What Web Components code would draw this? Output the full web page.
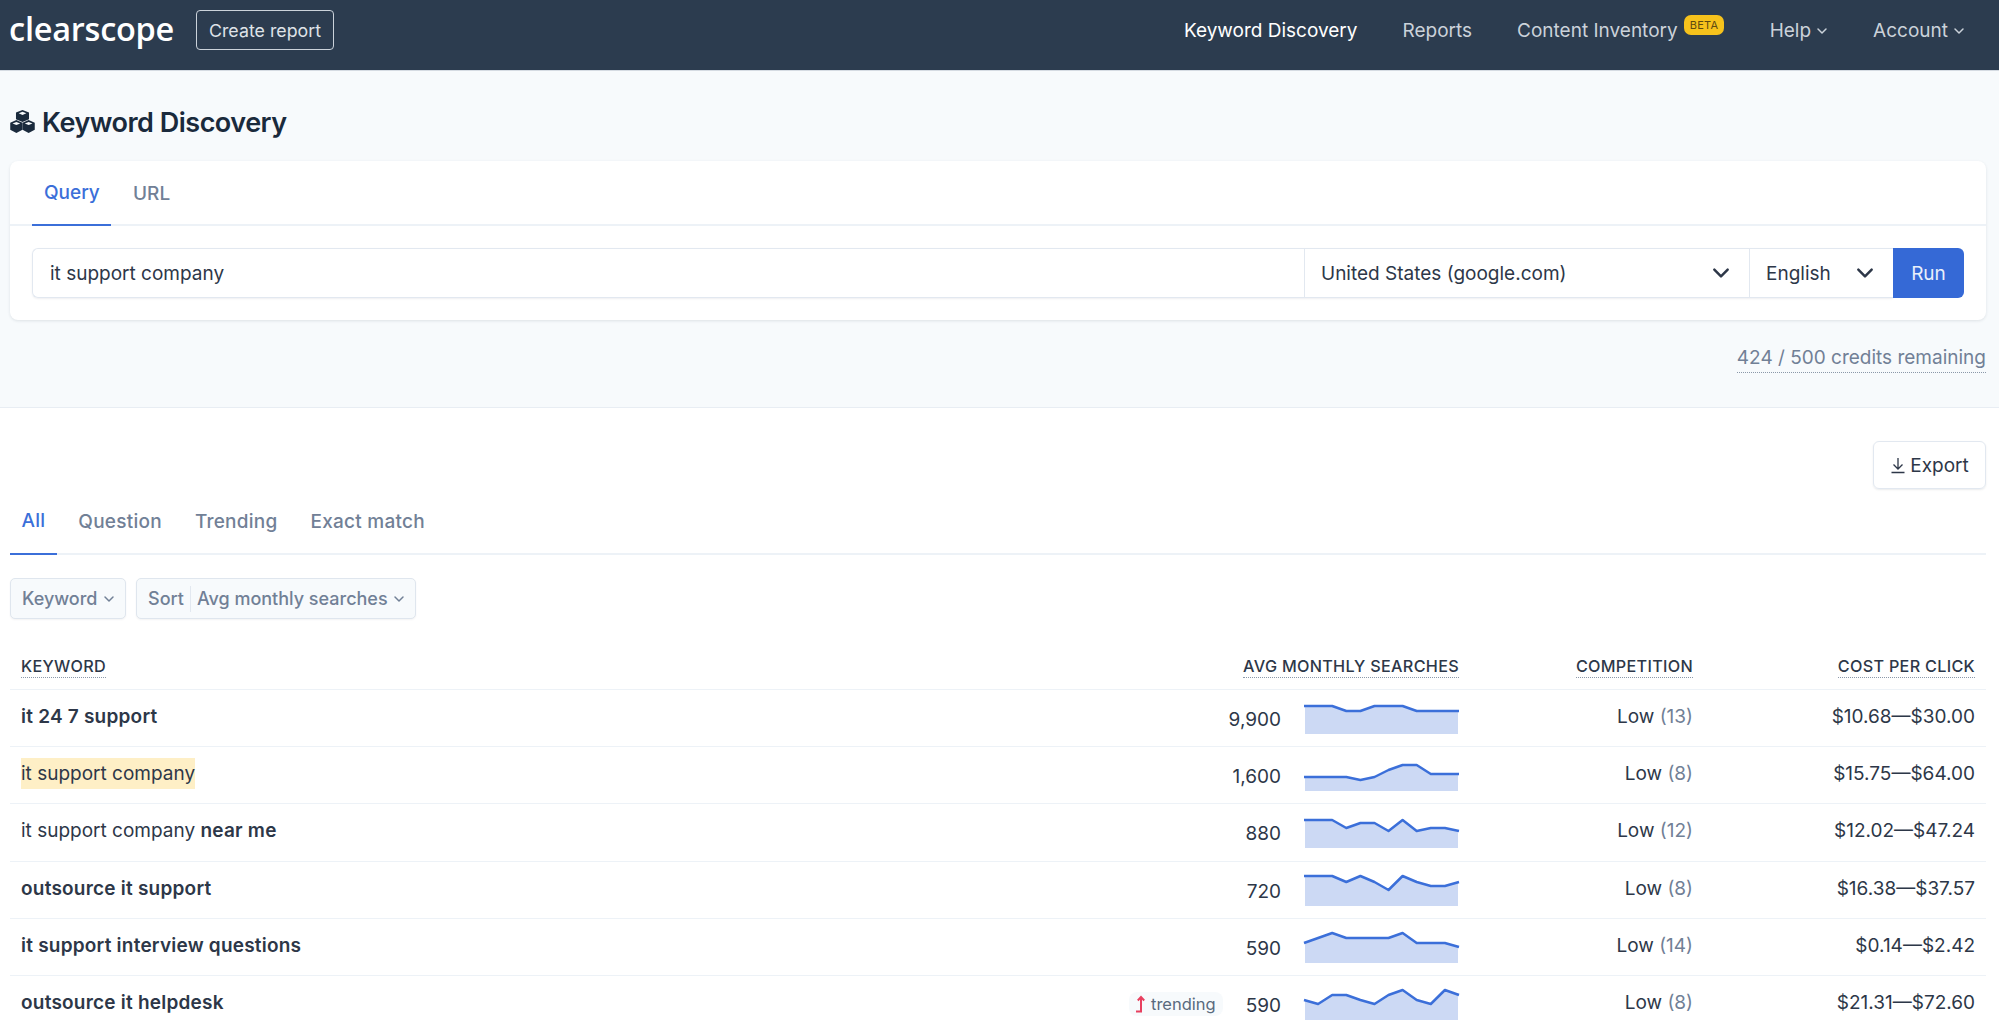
<!DOCTYPE html>
<html>
<head>
<meta charset="utf-8">
<title>Keyword Discovery</title>
<style>
  html, body { margin: 0; padding: 0; height: 100%; overflow: hidden; background: #fff; }
  body { font-family: Inter, "Liberation Sans", sans-serif; color: #2d3748; }
</style>
</head>
<body>

<kd-navbar>
  <nav-link active>Keyword Discovery</nav-link>
  <nav-link>Reports</nav-link>
  <nav-link badge="BETA">Content Inventory</nav-link>
  <nav-link caret>Help</nav-link>
  <nav-link caret>Account</nav-link>
</kd-navbar>

<kd-search-panel></kd-search-panel>

<kd-results>
  <kd-row volume="9,900" low="13" cpc="$10.68—$30.00" points="2,2,2,7,7,2,2,2,7,7,7,7"><b>it 24 7 support</b></kd-row>
  <kd-row volume="1,600" low="8" cpc="$15.75—$64.00" points="16,16,16,16,19,16,9,4,4,13,13,13"><mark style="background:#feefc6;color:inherit;padding:4px 0">it support company</mark></kd-row>
  <kd-row volume="880" low="12" cpc="$12.02—$47.24" points="2,2,2,10,5,5,13,2,13,10,10,13">it support company <b>near me</b></kd-row>
  <kd-row volume="720" low="8" cpc="$16.38—$37.57" points="0,0,0,6,0,6,14,0,6,10,10,6"><b>outsource it support</b></kd-row>
  <kd-row volume="590" low="14" cpc="$0.14—$2.42" points="10,5,0,5,5,5,5,0,10,10,10,14"><b>it support interview questions</b></kd-row>
  <kd-row volume="590" low="8" cpc="$21.31—$72.60" points="10,14,5,5,10,14,5,0,10,14,0,5" trending><b>outsource it helpdesk</b></kd-row>
</kd-results>

<script>
const CHEVRON = '<svg viewBox="0 0 12 12" fill="none" stroke="currentColor" stroke-width="1.5" stroke-linecap="round" stroke-linejoin="round"><path d="M2 4l4 4 4-4"/></svg>';

class NavLink extends HTMLElement {
  constructor() {
    super();
    const badge = this.getAttribute('badge');
    const caret = this.hasAttribute('caret') ? '<span class="caret">' + CHEVRON + '</span>' : '';
    this.attachShadow({mode: 'open'}).innerHTML = `
      <style>
        :host { display: flex; align-items: center; position: relative; color: #cbd2da; font-size: 19px; white-space: nowrap; }
        :host([active]) { color: #fff; }
        :host([badge]) { margin-right: 47px; }
        .caret { width: 12px; height: 12px; margin-left: 5px; display: block; }
        .caret svg { display: block; }
        .badge { position: absolute; left: calc(100% + 6px); top: -4px; background: #f6c21c; color: #5d4a12; font-size: 11px; line-height: 20px; height: 20px; padding: 0 6px; border-radius: 7px; letter-spacing: 0.3px; }
      </style>
      <slot></slot>${caret}${badge ? '<span class="badge">' + badge + '</span>' : ''}`;
  }
}
customElements.define('nav-link', NavLink);

class KdNavbar extends HTMLElement {
  constructor() {
    super();
    this.attachShadow({mode: 'open'}).innerHTML = `
      <style>
        :host { display: flex; align-items: center; height: 70px; box-sizing: content-box; background: #2c3c4f; border-bottom: 1px solid #d5dbe2; padding: 0 34px 0 9px; }
        .wrap { display: flex; align-items: center; flex: 1; height: 60px; margin-bottom: 10px; }
        .logo { font-family: "Open Sans", sans-serif; font-weight: 600; font-size: 32.500px; color: #fff; letter-spacing: -0.25px; line-height: 1; width: 167px; margin-top: -2px; white-space: nowrap; }
        .create { margin-left: 20px; width: 138px; height: 40px; box-sizing: border-box; border: 1px solid #cbd2da; border-radius: 4px; color: #dfe3e8; font-size: 17.800px; display: flex; align-items: center; justify-content: center; }
        .links { margin-left: auto; display: flex; gap: 45px; margin-top: 1px; }
      </style>
      <div class="wrap">
        <span class="logo">clearscope</span>
        <span class="create">Create report</span>
        <div class="links"><slot></slot></div>
      </div>`;
  }
}
customElements.define('kd-navbar', KdNavbar);

class KdSelect extends HTMLElement {
  constructor() {
    super();
    this.attachShadow({mode: 'open'}).innerHTML = `
      <style>
        :host { display: flex; align-items: center; justify-content: space-between; box-sizing: border-box; padding: 0 18px 0 16px; border-left: 1px solid #e2e8f0; height: 100%; font-size: 19px; color: #2d3748; }
        .c { width: 20px; height: 20px; color: #2d3748; }
        svg { display: block; }
      </style>
      <slot></slot><span class="c">${CHEVRON}</span>`;
  }
}
customElements.define('kd-select', KdSelect);

class KdSearchPanel extends HTMLElement {
  constructor() {
    super();
    this.attachShadow({mode: 'open'}).innerHTML = `
      <style>
        :host { display: block; height: 336px; background: #f7fafc; border-bottom: 1px solid #e8edf3; padding: 0 13px 0 10px; box-sizing: content-box; }
        h1 { margin: 0; height: 90px; display: flex; align-items: center; gap: 7px; padding-top: 12px; box-sizing: border-box; font-size: 27px; font-weight: 600; color: #1a2a3c; letter-spacing: -0.5px; }
        h1 svg { width: 25px; height: 23px; flex: none; margin-top: -1px; }
        .card { background: #fff; border-radius: 8px; box-shadow: 0 1px 3px rgba(45,55,72,.12); height: 159px; }
        .tabs { display: flex; height: 65px; padding-left: 22px; border-bottom: 2px solid #edf2f7; box-sizing: border-box; font-size: 19px; font-weight: 500; color: #718096; }
        .tab { display: flex; align-items: center; padding: 0 12px; height: 65px; box-sizing: border-box; padding-bottom: 1px; }
        .tab.on { color: #3b6fd9; border-bottom: 2px solid #3b6fd9; width: 79px; }
        .tab + .tab { margin-left: 10px; }
        .form { display: flex; margin: 22px 22px 0; height: 50px; }
        .field { display: flex; flex: 1; height: 50px; box-sizing: border-box; border: 1px solid #e2e8f0; border-right: 0; border-radius: 6px 0 0 6px; box-shadow: 0 1px 2px rgba(45,55,72,.08); font-size: 19px; }
        .q { flex: 1; display: flex; align-items: center; padding-left: 17px; }
        kd-select.country { width: 445px; }
        kd-select.lang { width: 144px; }
        .run { width: 71px; background: #3569d6; color: #e9effb; font-size: 19px; border-radius: 0 6px 6px 0; display: flex; align-items: center; justify-content: center; }
        .credits { display: flex; justify-content: flex-end; margin-top: 26px; font-size: 19px; color: #718096; }
        .credits span { border-bottom: 1px dotted #8b98a9; padding-bottom: 2px; line-height: 24px; }
      </style>
      <h1>
        <svg viewBox="0 0 26 24"><g fill="#1a2a3c">
          <path d="M13 0l6.800 2.700v7L13 12.400 6.200 9.700v-7z"/>
          <path d="M6.600 10.500L13 13.200v7.400L6.600 24 .2 20.600v-7.400z"/>
          <path d="M19.400 10.500l6.400 2.700v7.400L19.400 24 13 20.600v-7.400z"/>
        </g><g fill="#f7fafc">
          <path d="M13 1.900l4 1.600-4 1.600-4-1.600z"/>
          <path d="M6.600 12.400l4 1.600-4 1.600-4-1.600z"/>
          <path d="M19.400 12.400l4 1.600-4 1.600-4-1.600z"/>
        </g></svg>
        Keyword Discovery
      </h1>
      <div class="card">
        <div class="tabs"><span class="tab on">Query</span><span class="tab">URL</span></div>
        <div class="form">
          <div class="field">
            <div class="q">it support company</div>
            <kd-select class="country">United States (google.com)</kd-select>
            <kd-select class="lang">English</kd-select>
          </div>
          <div class="run">Run</div>
        </div>
      </div>
      <div class="credits"><span>424 / 500 credits remaining</span></div>`;
  }
}
customElements.define('kd-search-panel', KdSearchPanel);

class KdSpark extends HTMLElement {
  constructor() {
    super();
    const vals = this.getAttribute('points').split(',').map(Number);
    const step = 155 / (vals.length - 1);
    const line = vals.map((v, i) => (i * step).toFixed(1) + ',' + (v + 1)).join(' ');
    this.attachShadow({mode: 'open'}).innerHTML = `
      <style>
        :host { display: block; width: 155px; height: 31px; flex: none; }
        svg { display: block; overflow: visible; }
      </style>
      <svg width="155" height="31" viewBox="0 0 155 31">
        <polygon points="1,31 1,${vals[0] + 1} ${line} 154,${vals[vals.length - 1] + 1} 154,31" fill="#ccd9f4"/>
        <polyline points="${line}" fill="none" stroke="#3b6fd9" stroke-width="2.500" stroke-linejoin="round"/>
      </svg>`;
  }
}
customElements.define('kd-spark', KdSpark);

class KdRow extends HTMLElement {
  constructor() {
    super();
    const a = n => this.getAttribute(n);
    const trend = this.hasAttribute('trending') ? `<span class="trend">
      <svg width="10" height="18" viewBox="0 0 10 18" fill="none" stroke="#e8405f" stroke-width="2"><path d="M0 16.500h5V2"/><path d="M1.800 5.500L5 2l3.200 3.500"/></svg>trending</span>` : '';
    this.attachShadow({mode: 'open'}).innerHTML = `
      <style>
        :host { display: grid; grid-template-columns: 1fr 234px 282px; align-items: center; height: 57.200px; box-sizing: border-box; border-bottom: 1px solid #edf2f7; padding: 0 11px; font-size: 19px; color: #2d3748; }
        .kw { display: flex; align-items: center; min-width: 0; }
        .name { flex: 1; white-space: pre-wrap; padding-bottom: 3px; }
        ::slotted(b) { font-weight: 600; letter-spacing: 0.22px; }
        .trend { display: flex; align-items: center; gap: 5px; height: 24px; padding: 0 7px; margin-right: 23px; background: #f7fafc; border-radius: 8px; font-size: 16.500px; color: #5a6a7e; }
        .num { text-align: right; margin-right: 23px; padding-top: 3px; }
        kd-spark { margin-top: 1px; }
        .comp, .cpc { text-align: right; padding-bottom: 3px; }
        .comp i { font-style: normal; color: #718096; }
      </style>
      <div class="kw"><span class="name"><slot></slot></span>${trend}<span class="num">${a('volume')}</span><kd-spark points="${a('points')}"></kd-spark></div>
      <div class="comp">Low <i>(${a('low')})</i></div>
      <div class="cpc">${a('cpc')}</div>`;
  }
}
customElements.define('kd-row', KdRow);

class KdResults extends HTMLElement {
  constructor() {
    super();
    this.attachShadow({mode: 'open'}).innerHTML = `
      <style>
        :host { display: block; padding: 0 13px 0 10px; }
        .top { display: flex; justify-content: flex-end; padding-top: 33px; }
        .export { display: flex; align-items: center; justify-content: center; gap: 4px; width: 113px; height: 48px; box-sizing: border-box; border: 1px solid #e2e8f0; border-radius: 6px; box-shadow: 0 1px 2px rgba(45,55,72,.1); font-size: 19px; color: #2d3748; }
        .tabs { display: flex; height: 66px; border-bottom: 2px solid #edf2f7; box-sizing: border-box; font-size: 19px; font-weight: 500; color: #718096; letter-spacing: 0.25px; }
        .tab { height: 66px; box-sizing: border-box; display: flex; align-items: center; padding: 0 11.500px 1px; }
        .tab + .tab { margin-left: 10px; }
        .tab.on { color: #3b6fd9; border-bottom: 2px solid #3b6fd9; }
        .filters { display: flex; gap: 10px; margin-top: 23px; }
        .btn { display: flex; align-items: center; height: 41px; box-sizing: border-box; background: #f7fafc; border: 1px solid #dfe6ee; border-radius: 5px; padding: 0 10.500px 0 11px; font-size: 18px; font-weight: 500; color: #718096; box-shadow: 0 1px 2px rgba(45,55,72,.06); }
        .btn svg { width: 12px; height: 12px; margin-left: 5px; }
        .sep { width: 1px; height: 26px; background: #e2e8f0; margin: 0 6px; }
        .head { display: grid; grid-template-columns: 1fr auto 234px 282px; padding: 0 11px; height: 71px; align-items: end; border-bottom: 1px solid #edf2f7; font-size: 16.200px; font-weight: 500; letter-spacing: 0.3px; color: #2d3748; box-sizing: border-box; }
        .head div { padding-bottom: 13px; }
        .head .r { text-align: right; }
        .head span { border-bottom: 1px dotted #8b98a9; padding-bottom: 1px; }
      </style>
      <div class="top"><div class="export">
        <svg width="16" height="18" viewBox="0 0 16 18" fill="none" stroke="#2d3748" stroke-width="1.300"><path d="M8 2v11M3.500 8.500L8 13l4.500-4.500M1.500 16.500h13"/></svg>Export</div></div>
      <div class="tabs"><span class="tab on">All</span><span class="tab">Question</span><span class="tab">Trending</span><span class="tab">Exact match</span></div>
      <div class="filters">
        <div class="btn">Keyword${CHEVRON}</div>
        <div class="btn">Sort<span class="sep"></span>Avg monthly searches${CHEVRON}</div>
      </div>
      <div class="head">
        <div><span>KEYWORD</span></div>
        <div class="r"><span>AVG MONTHLY SEARCHES</span></div>
        <div class="r"><span>COMPETITION</span></div>
        <div class="r"><span>COST PER CLICK</span></div>
      </div>
      <slot></slot>`;
  }
}
customElements.define('kd-results', KdResults);
</script>
</body>
</html>
